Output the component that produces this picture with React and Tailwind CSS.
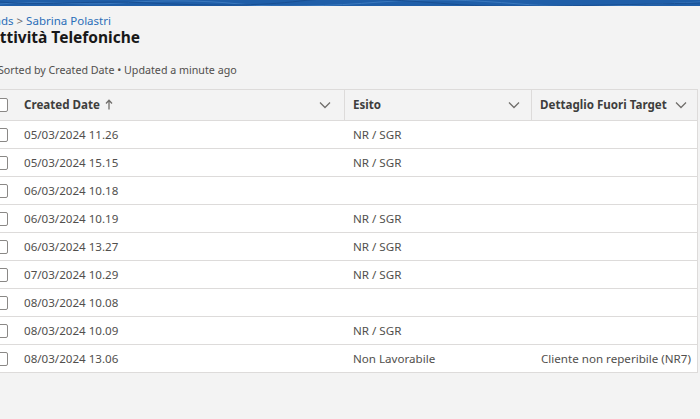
import React from 'react';

const ROWS = [
  { date: '05/03/2024 11.26', esito: 'NR / SGR', dettaglio: '' },
  { date: '05/03/2024 15.15', esito: 'NR / SGR', dettaglio: '' },
  { date: '06/03/2024 10.18', esito: '', dettaglio: '' },
  { date: '06/03/2024 10.19', esito: 'NR / SGR', dettaglio: '' },
  { date: '06/03/2024 13.27', esito: 'NR / SGR', dettaglio: '' },
  { date: '07/03/2024 10.29', esito: 'NR / SGR', dettaglio: '' },
  { date: '08/03/2024 10.08', esito: '', dettaglio: '' },
  { date: '08/03/2024 10.09', esito: 'NR / SGR', dettaglio: '' },
  { date: '08/03/2024 13.06', esito: 'Non Lavorabile', dettaglio: 'Cliente non reperibile (NR7)' },
];

const GRID = 'grid grid-cols-[16px_329px_187px_165px]';

function Chevron() {
  return (
    <svg width="12" height="8" viewBox="0 0 12 8" fill="none" className="shrink-0">
      <path d="M1 1.5 L6 6.5 L11 1.5" stroke="#706e6b" strokeWidth="1.3" />
    </svg>
  );
}

function Checkbox() {
  return <div className="w-[14px] h-[14px] -ml-[6px] border border-[#8a8886] rounded-[2px] bg-white" />;
}

function BlueBar() {
  return (
    <div className="h-[6px] w-full bg-[#1f5ea8] overflow-hidden">
      <svg width="700" height="6" viewBox="0 0 700 6">
        <path d="M0 4 C40 0 80 6 120 3 S200 0 240 4 S330 6 380 2 S470 0 520 4 S620 6 700 2" stroke="#3a78bd" strokeWidth="1" fill="none" />
        <path d="M0 2 C50 6 90 0 150 3 S260 6 300 1 S400 0 450 4 S560 6 700 3" stroke="#184f93" strokeWidth="1" fill="none" />
      </svg>
    </div>
  );
}

export default function App() {
  return (
    <div
      className="w-[700px] h-[419px] bg-[#f3f3f3] overflow-hidden"
      style={{ fontFamily: '"Noto Sans", "Open Sans", Arial, sans-serif' }}
    >
      <BlueBar />
      <div className="pt-[8px] text-[11.5px] leading-[14px] -ml-[18px] text-[#2a6eb8] whitespace-nowrap">
        Leads <span className="text-[#6b6b6b]">&gt;</span> Sabrina Polastri
      </div>
      <div className="text-[15.5px] leading-[18px] font-bold text-[#181818] -ml-[11px] whitespace-nowrap">
        Attività Telefoniche
      </div>
      <div className="mt-[16px] text-[10.7px] leading-[16px] text-[#514f4d] -ml-[2px] whitespace-nowrap">
        Sorted by Created Date • Updated a minute ago
      </div>

      <div className="mt-[11px] w-[698px] border-t border-r border-[#dddbda] bg-white">
        <div className={`${GRID} h-[31px] bg-[#f3f3f3] border-b border-[#dddbda] items-center text-[11.6px] font-bold text-[#3e3e3c]`}>
          <div className="flex items-center">
            <Checkbox />
          </div>
          <div className="flex items-center justify-between h-full pl-[8px] pr-[13px] border-r border-[#dddbda]">
            <span className="flex items-center gap-[5px]">
              Created Date
              <svg width="8" height="11" viewBox="0 0 8 11" fill="none">
                <path d="M4 10.5 V1.5 M1 4.5 L4 1.2 L7 4.5" stroke="#706e6b" strokeWidth="1.3" />
              </svg>
            </span>
            <Chevron />
          </div>
          <div className="flex items-center justify-between h-full pl-[8px] pr-[11px] border-r border-[#dddbda]">
            <span>Esito</span>
            <Chevron />
          </div>
          <div className="flex items-center justify-between h-full pl-[8px] pr-[10px]">
            <span>Dettaglio Fuori Target</span>
            <Chevron />
          </div>
        </div>
        {ROWS.map((r, i) => (
          <div key={i} className={`${GRID} h-[28px] border-b border-[#dddbda] items-center text-[11.6px] text-[#514f4d]`}>
            <div className="flex items-center">
              <Checkbox />
            </div>
            <div className="pl-[8px] whitespace-nowrap">{r.date}</div>
            <div className="pl-[8px] whitespace-nowrap">{r.esito}</div>
            <div className="pl-[9px] whitespace-nowrap">{r.dettaglio}</div>
          </div>
        ))}
      </div>
    </div>
  );
}
